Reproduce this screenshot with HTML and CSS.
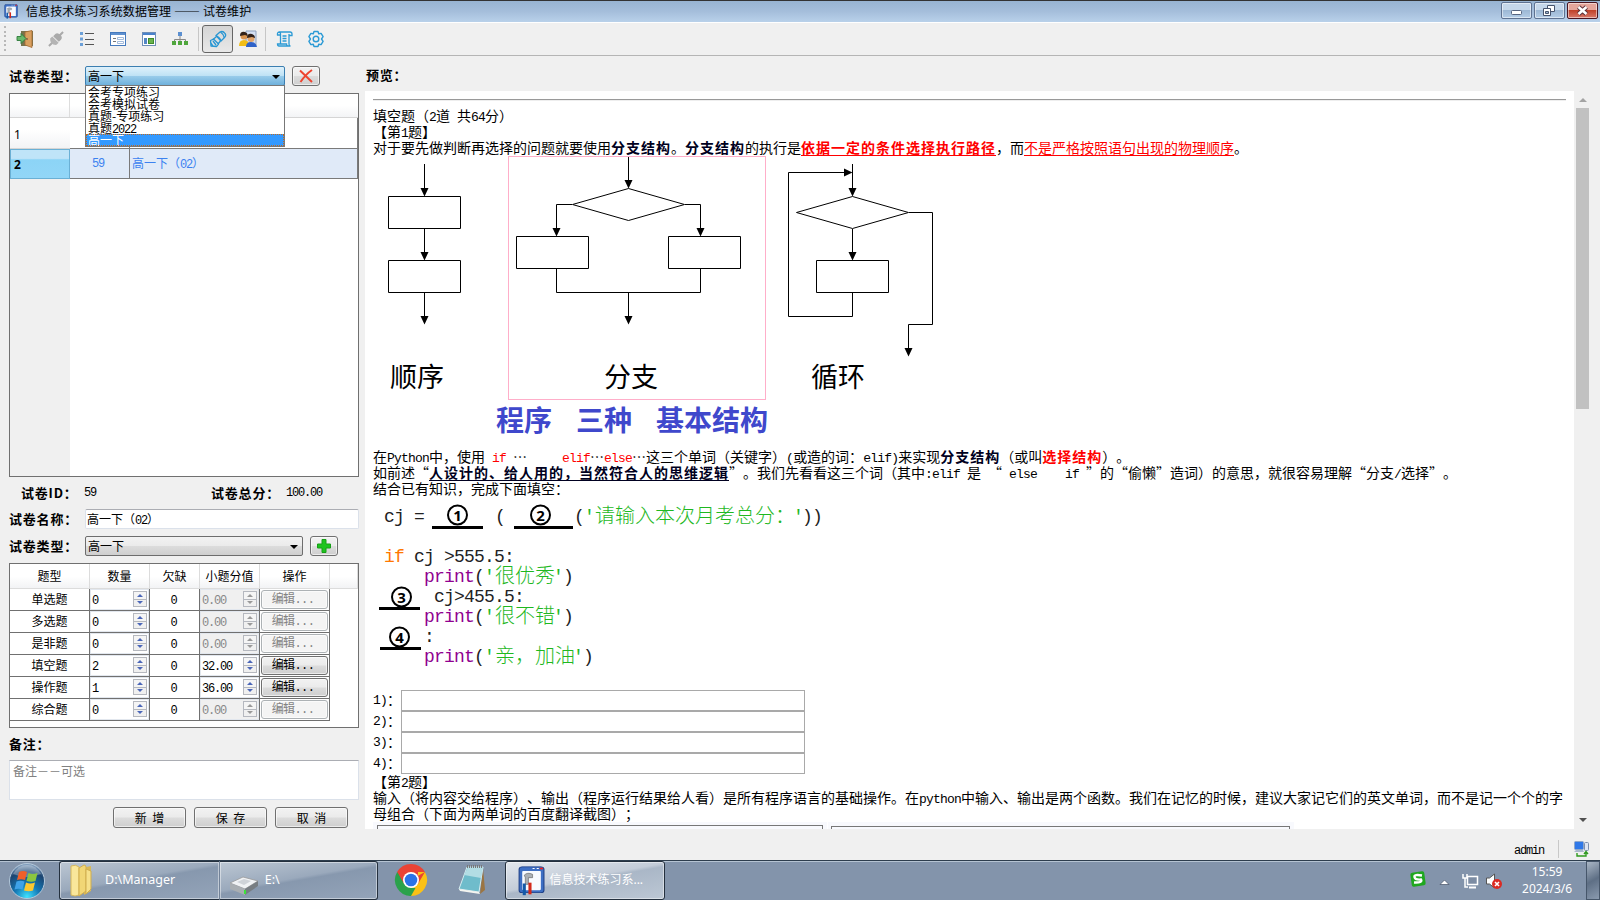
FILE: index.html
```html
<!doctype html>
<html lang="zh-CN">
<head>
<meta charset="utf-8">
<title>信息技术练习系统数据管理</title>
<link rel="stylesheet" href="styles.css">
</head>
<body>
<svg class="defs" width="0" height="0">
	<symbol id="app" viewBox="0 0 28 36" preserveAspectRatio="none">
		<rect x="3" y="1" width="24" height="31" rx="3" fill="#3d6fc4" stroke="#1d3f86"/>
		<rect x="6" y="6" width="18" height="23" rx="1" fill="#f7faff"/>
		<path d="M16 3h2M20 3h2" stroke="#fff"/><path d="M23 3h3" stroke="#e22" stroke-width="2"/>
		<path d="M8 11q3-4 8-1v4h-4v8h-3v-8z" fill="#aab0b6" stroke="#666" stroke-width=".7"/>
		<path d="M8 21v14" stroke="#1459a8" stroke-width="3"/>
		<path d="M13.500 20v14" stroke="#d3291b" stroke-width="3"/>
	</symbol>
</svg>

<div class="titlebar">
	<svg class="ticon" width="15" height="16"><use href="#app" width="15" height="15"/></svg>
	<span class="ttext">信息技术练习系统数据管理 <span class="dash">——</span> 试卷维护</span>
	<div class="winbtns">
		<span class="wb"><svg width="29" height="15"><rect x="9.5" y="7.500" width="10" height="4" rx="1" fill="#fff" stroke="#566480"/></svg></span>
		<span class="wb"><svg width="29" height="15"><g fill="#fff" stroke="#47546d"><path d="M12.500 2.500h7v6h-7z"/><path d="M8.500 5.500h7v7h-7z"/></g><path d="M10.500 8.500h3v2h-3z" fill="#9bb5d2" stroke="#47546d"/></svg></span>
		<span class="wb close"><svg width="29" height="15"><path d="M10.500 4l8 7M18.500 4l-8 7" stroke="#5a3038" stroke-width="4.500"/><path d="M10.500 4l8 7M18.500 4l-8 7" stroke="#fff" stroke-width="2.600"/></svg></span>
	</div>
</div>

<div class="toolbar">
	<span class="grip"></span>
	<svg class="tool" width="18" height="18"><path d="M5 1h12v15H5z" fill="#77734c"/><path d="M9 2l7-1.500v17L9 15z" fill="#d9a05f" stroke="#a46b32" stroke-width=".8"/><circle cx="11" cy="9" r=".8" fill="#533"/><path d="M1 6.500h4V3.500l5 5-5 5v-3H1z" fill="#68b86b" stroke="#2c7a3a" stroke-width=".9"/></svg>
	<svg class="tool" width="18" height="18"><g transform="rotate(45 9 9)" fill="#aaa"><path d="M8-1h2v5H8zM8 14h2v5H8z"/><path d="M5 9V6q0-3 4-3t4 3v3z"/><path d="M4.500 9.800h9v3q-4.500 5-9 0z" fill="#b4b4b4"/></g></svg>
	<svg class="tool" width="18" height="18"><g fill="#6ca0d8"><rect x="2" y="2" width="3" height="3"/><rect x="2" y="7.500" width="3" height="3"/><rect x="2" y="13" width="3" height="3"/></g><path d="M7 3.500h9M7 9.500h9M7 14.500h9" stroke="#555"/></svg>
	<svg class="tool" width="18" height="18"><rect x="1.500" y="2.500" width="15" height="13" fill="#fff" stroke="#4479bd"/><path d="M2 4h14" stroke="#5e90cf" stroke-width="2"/><path d="M4 8.500h3M4 11.500h3" stroke="#777"/><path d="M8.500 7.500h6v2h-6zM8.500 11.500h6v2h-6z" fill="none" stroke="#8aa9d3" stroke-width=".8"/></svg>
	<svg class="tool" width="18" height="18"><rect x="2.500" y="2.500" width="13" height="13" fill="#fff" stroke="#6f8fb8"/><path d="M3 4h12" stroke="#4a82cb" stroke-width="2"/><rect x="4" y="8" width="3" height="6" fill="#5386c4"/><rect x="8.500" y="8.500" width="5" height="5" fill="#69b34c" stroke="#3e8b2d"/></svg>
	<svg class="tool" width="18" height="18"><rect x="7" y="2" width="4" height="4" fill="#5b8fd0"/><path d="M9 6v3M3.500 12V9.500h11V12M9 9v3" fill="none" stroke="#888"/><g fill="#4fa63c"><rect x="1" y="11" width="4" height="4"/><rect x="7" y="11" width="4" height="4"/><rect x="13" y="11" width="4" height="4"/></g></svg>
	<span class="sep"></span>
	<span class="tool pressed"><svg width="18" height="18"><g fill="none" stroke="#2796d3" stroke-width="1.300" stroke-linejoin="round"><path d="M7 5.500l4-3.500q3-1.500 5 1.500 1.500 2-.5 4L12 11z"/><path d="M11.500 2q3 2 4 6M7 5.500q4 2 5 5.500M7.500 6.500l-4 3.500M11.500 11L9 14"/><path d="M1.500 10.500l3-1.500 5 5-2 2.500-5.500-.5zM4 11l3 4M2 13l2 3"/></g></svg></span>
	<svg class="tool" width="18" height="18"><path d="M7 1h10v15H7z" fill="#d5e0f2" stroke="#8da0bd"/><circle cx="5" cy="6" r="3.500" fill="#d9944f"/><path d="M1 6q0-5 5-4 3 1 2.500 4L6 5z" fill="#32221a"/><path d="M0 16q0-6 5-6t5 6z" fill="#f1bd17"/><circle cx="12" cy="8.500" r="3.500" fill="#e2a468"/><path d="M8 8q0-5 5-4 3 1 3 4l-3-1z" fill="#32221a"/><path d="M7 17q0-5 5-5t6 5z" fill="#2f62c8"/></svg>
	<span class="sep last"></span>
	<svg class="tool" width="18" height="18"><g fill="none" stroke="#2b9ad5" stroke-width="1.300"><path d="M4.500 14V4q0-2-1.500-2h11q2 0 2 2v1.500h-3M13 4v10q0 2 1.500 2H3q-1.500 0-1.500-2h9q0 2 1.500 2M4.500 5H1.500q-.5-3 2-3"/><path d="M6.500 6h4M6.500 8.500h4M6.500 11h4"/></g></svg>
	<svg class="tool" width="18" height="18"><g fill="none" stroke="#2b9ad5" stroke-width="1.400" stroke-linejoin="round"><path d="M7 1.500h4l.7 2.300 2.400-.4 2 3.300L14.500 9l1.600 2.300-2 3.300-2.400-.4L11 16.500H7l-.7-2.300-2.400.4-2-3.300L3.500 9 1.900 6.700l2-3.300 2.400.4z"/><circle cx="9" cy="9" r="2.800"/></g></svg>
</div>

<div class="main">
	<div class="left">
		<div class="row">
			<span class="lbl">试卷类型：</span>
			<div class="combo hot">高一下<i class="arr"></i>
				<div class="drop">
					<div>会考专项练习</div>
					<div>会考模拟试卷</div>
					<div>真题-专项练习</div>
					<div>真题<span class="en">2022</span></div>
					<div class="sel">高一下</div>
				</div>
			</div>
			<span class="btn sq"><svg width="16" height="16"><path d="M2 2.500l12 11.500M14 2q-6 4-11.500 12" fill="none" stroke="#ee4430" stroke-width="2"/></svg></span>
		</div>

		<div class="papers">
			<div class="phead"><span class="c0"></span><span class="c1"></span><span class="c2"></span></div>
			<div class="prow"><span class="c0">1</span><span class="c1"></span><span class="c2"></span></div>
			<div class="prow on"><span class="c0">2</span><span class="c1 en">59</span><span class="c2">高一下（<span class="en">02</span>）</span></div>
			<div class="pfill"></div>
		</div>

		<div class="ids">
			<span class="lbl idl">试卷ID：</span><span class="en idv">59</span>
			<span class="lbl sum">试卷总分：</span><span class="en">100.00</span>
		</div>
		<div class="row">
			<span class="lbl">试卷名称：</span>
			<div class="field">高一下（<span class="en">02</span>）</div>
		</div>
		<div class="row">
			<span class="lbl">试卷类型：</span>
			<div class="combo wide">高一下<i class="arr"></i></div>
			<span class="btn sq"><svg width="14" height="14"><path d="M5 .5h4V5h4.500v4H9v4.500H5V9H.5V5H5z" fill="#1ec41e" stroke="#16a016"/></svg></span>
		</div>

		<div class="types">
			<div class="trow thead"><span>题型</span><span>数量</span><span>欠缺</span><span>小题分值</span><span>操作</span><span></span></div>
			<div class="trow"><span>单选题</span><span class="num">0<i class="spin"></i></span><span class="en">0</span><span class="num off">0.00<i class="spin"></i></span><span><b class="btn off">编辑...</b></span></div>
			<div class="trow"><span>多选题</span><span class="num">0<i class="spin"></i></span><span class="en">0</span><span class="num off">0.00<i class="spin"></i></span><span><b class="btn off">编辑...</b></span></div>
			<div class="trow"><span>是非题</span><span class="num">0<i class="spin"></i></span><span class="en">0</span><span class="num off">0.00<i class="spin"></i></span><span><b class="btn off">编辑...</b></span></div>
			<div class="trow"><span>填空题</span><span class="num">2<i class="spin"></i></span><span class="en">0</span><span class="num">32.00<i class="spin"></i></span><span><b class="btn">编辑...</b></span></div>
			<div class="trow"><span>操作题</span><span class="num">1<i class="spin"></i></span><span class="en">0</span><span class="num">36.00<i class="spin"></i></span><span><b class="btn">编辑...</b></span></div>
			<div class="trow"><span>综合题</span><span class="num">0<i class="spin"></i></span><span class="en">0</span><span class="num off">0.00<i class="spin"></i></span><span><b class="btn off">编辑...</b></span></div>
		</div>

		<div class="lbl note">备注：</div>
		<div class="memo">备注－－可选</div>
		<div class="actions">
			<span class="btn">新 增</span><span class="btn">保 存</span><span class="btn">取 消</span>
		</div>
	</div>

	<div class="right">
		<div class="lbl plabel">预览：</div>
		<div class="pwrap">
			<div class="preview">
				<hr>
<div class="line">填空题（<span class="py">2</span>道<span class="py"> </span>共<span class="py">64</span>分）</div>
<div class="line">【第<span class="py">1</span>题】</div>
<div class="line">对于要先做判断再选择的问题就要使用<b class="navy">分支结构</b>。<b class="navy">分支结构</b>的执行是<b class="red u">依据一定的条件选择执行路径</b>，而<span class="red u">不是严格按照语句出现的物理顺序</span>。</div>
				<svg class="flow" width="600" height="293" viewBox="373 156 600 293">
					<rect x="508.500" y="156.500" width="257" height="243" fill="none" stroke="#ffaec9"/>
					<g fill="none" stroke="#000">
						<path d="M424.500 164v27M388.500 196.500h72v32h-72zM424.500 229v27M388.500 260.500h72v32h-72zM424.500 293v27"/>
						<path d="M628.500 157v27M572.500 204.500l56-16 56 16-56 16zM572 204.500h-15.500V233M685 204.500h15.500V233"/>
						<path d="M516.500 236.500h72v32h-72zM668.500 236.500h72v32h-72zM556.500 269v23.500h144V269M628.500 293v27"/>
						<path d="M852.500 164v27M796.500 212.500l56-16 56 16-56 16zM852.500 229v27M816.500 260.500h72v32h-72z"/>
						<path d="M852.500 293v23.500h-64v-144H845M909 212.500h23.500v112h-24V350"/>
					</g>
					<g fill="#000">
						<path d="M420.500 188h8l-4 8.500zM420.500 252h8l-4 8.500zM420.500 316h8l-4 8.500z"/>
						<path d="M624.500 180h8l-4 8.500zM552.500 228h8l-4 8.500zM696.500 228h8l-4 8.500zM624.500 316h8l-4 8.500z"/>
						<path d="M848.500 188h8l-4 8.500zM848.500 252h8l-4 8.500zM904.500 348h8l-4 8.500zM844 168.500v8l8.500-4z"/>
					</g>
					<g class="cap">
						<text x="390" y="387">顺序</text><text x="604" y="387">分支</text><text x="811" y="387">循环</text>
					</g>
					<g class="big">
						<text x="496" y="431">程序</text><text x="576" y="431">三种</text><text x="656" y="431">基本结构</text>
					</g>
				</svg>
<div class="line">在<span class="py">Python</span>中，使用<span class="py"> <span class="red">if</span> </span>…<span class="py">     <span class="red">elif</span></span>…<span class="py red">else</span>…这三个单词（关键字）<span class="py">(</span>或造的词：<span class="py">elif)</span>来实现<b class="navy">分支结构</b>（或叫<b class="red">选择结构</b>）。</div>
<div class="line">如前述“<b class="navy u">人设计的、给人用的，当然符合人的思维逻辑</b>”。我们先看看这三个词（其中<span class="py">:elif </span>是<span class="py"> </span>“<span class="py"> else    if </span>”的“偷懒”造词）的意思，就很容易理解“分支<span class="py">/</span>选择”。</div>
<div class="line">结合已有知识，完成下面填空：</div>
				<svg class="code" width="600" height="193" viewBox="373 497 600 193">
					<g fill="#222">
						<text x="384" y="522">cj =</text><text x="495" y="522">(</text>
						<text x="574" y="522">(<tspan class="str">'</tspan></text><text class="str zh" x="595" y="523">请输入本次月考总分：</text><text x="793" y="522"><tspan class="str">'</tspan><tspan x="802">))</tspan></text>
						<text x="384" y="562"><tspan class="kw">if</tspan><tspan x="414">cj &gt;555.5:</tspan></text>
						<text x="424" y="582"><tspan class="fn">print</tspan>(<tspan class="str">'</tspan></text><text class="str zh" x="495" y="583">很优秀</text><text x="553" y="582"><tspan class="str">'</tspan><tspan x="563">)</tspan></text>
						<text x="434" y="602">cj&gt;455.5:</text>
						<text x="424" y="622"><tspan class="fn">print</tspan>(<tspan class="str">'</tspan></text><text class="str zh" x="495" y="623">很不错</text><text x="553" y="622"><tspan class="str">'</tspan><tspan x="563">)</tspan></text>
						<text x="424" y="642">:</text>
						<text x="424" y="662"><tspan class="fn">print</tspan>(<tspan class="str">'</tspan></text><text class="str zh" x="495" y="663">亲，加油</text><text x="573" y="662"><tspan class="str">'</tspan><tspan x="583">)</tspan></text>
					</g>
					<path d="M432 527.500h51M514 527.500h59M379 608.500h41M380 648.500h41" stroke="#000" stroke-width="3"/>
					<g fill="none" stroke="#000" stroke-width="2"><circle cx="457.500" cy="515" r="9.500"/><circle cx="540.500" cy="515" r="9.500"/><circle cx="401.500" cy="597" r="9.500"/><circle cx="399.500" cy="637" r="9.500"/></g>
					<g class="ring"><text x="457.500" y="520.500">1</text><text x="540.500" y="520.500">2</text><text x="401.500" y="602.500">3</text><text x="399.500" y="642.500">4</text></g>
				</svg>
				<div class="ans"><span class="py">1)</span>：<span class="box"></span></div>
				<div class="ans"><span class="py">2)</span>：<span class="box"></span></div>
				<div class="ans"><span class="py">3)</span>：<span class="box"></span></div>
				<div class="ans"><span class="py">4)</span>：<span class="box"></span></div>
<div class="line">【第<span class="py">2</span>题】</div>
<div class="line">输入（将内容交给程序）、输出（程序运行结果给人看）是所有程序语言的基础操作。在<span class="py">python</span>中输入、输出是两个函数。我们在记忆的时候，建议大家记它们的英文单词，而不是记一个个的字</div>
<div class="line">母组合（下面为两单词的百度翻译截图）；</div>
				<div class="shots"><span class="s1"><i></i></span><span class="s2"><i></i></span></div>
			</div>
			<div class="scroll"><i class="up"></i><i class="thumb"></i><i class="down"></i></div>
		</div>
	</div>
</div>

<div class="status">
	<span class="admin">admin</span><span class="sline"></span>
	<svg width="17" height="17"><rect x="1.500" y=".5" width="9" height="8" rx="1" fill="#2f78e8" stroke="#8fa7c9"/><path d="M1 11h10l-1-2H3z" fill="#aab8cc"/><rect x="11.500" y="1.500" width="4" height="8" rx="1" fill="#dfe6f2" stroke="#7d8eac"/><path d="M4 12v3h9v-4M11 13l2-2.500 2 2.500" fill="none" stroke="#2e9a1e" stroke-width="1.400"/></svg>
</div>

<div class="taskbar">
	<svg class="orb" width="38" height="38">
		<defs>
			<radialGradient id="og" cx=".5" cy=".95" r=".9"><stop offset="0" stop-color="#3fe3ff"/><stop offset=".4" stop-color="#1478b5"/><stop offset=".8" stop-color="#1c4470"/><stop offset="1" stop-color="#7f9cbb"/></radialGradient>
		</defs>
		<circle cx="19" cy="19" r="17.500" fill="url(#og)" stroke="#b4c8da"/>
		<path d="M5 12Q10 3 19 3t14 9q-14 6-28 0z" fill="#fff" opacity=".3"/>
		<path d="M11 10q4-2 8 0l-2 8q-4-1.500-8 0z" fill="#f0602a"/>
		<path d="M20.500 11q4 2 9 0l-2 8q-4 1.500-9 0z" fill="#8cc63f"/>
		<path d="M8.500 19.500q4-1.500 8 0l-2 8q-4-1.500-8 0z" fill="#3fa2e8"/>
		<path d="M18 20.500q4 2 9 0l-2 8q-4 1.500-9 0z" fill="#fdc82f"/>
	</svg>
	<div class="tb first">
		<svg width="34" height="36"><path d="M14 5l9-2v25l-7 4z" fill="#d9b955"/><path d="M3 3q5-2 8 1v28q-4 2-8 0z" fill="#f9e79b" stroke="#d5b75d"/><path d="M11 5l5-3q2 0 2 2v24l-7 5z" fill="#f1d675" stroke="#d1ae4d"/><path d="M18 6l5 2v18l-5 5z" fill="#f6e08a" stroke="#cfad4e"/></svg>
		<span>D:\Manager</span>
	</div>
	<div class="tb second">
		<svg width="34" height="36"><path d="M2 20L15 14l15 4-13 8z" fill="#f0f2f4" stroke="#999" stroke-width=".8"/><path d="M2 20l15 6v6L2 26z" fill="#a9aeb2"/><path d="M17 26l13-8v5l-13 9z" fill="#777d82"/><path d="M17 27v4" stroke="#3be23b" stroke-width="2"/><path d="M9 19l7-3 7 2-7 4z" fill="#cfd3d8"/></svg>
		<span>E:\</span>
	</div>
	<svg class="chrome" width="34" height="34" viewBox="-17 -17 34 34">
		<path d="M0 0L-13.900-8A16 16 0 0 1 13.900-8z" fill="#ea4335"/>
		<path d="M0 0L13.900-8A16 16 0 0 1 0 16z" fill="#fbc116"/>
		<path d="M0 0L0 16A16 16 0 0 1-13.900-8z" fill="#2ba24c"/>
		<path d="M0-8h13.900L7 4zM-7 4L-13.900-8 0-8z" fill="#ea4335"/><path d="M7 4L0 16 3-2 13.900-8 7-8z" fill="#fbc116"/><path d="M-13.900-8L-7 4 0 8 4.500 8 0 16q-14-4-13.900-24z" fill="#2ba24c"/>
		<circle r="8" fill="#fff"/><circle r="6.300" fill="#2b73e8"/>
	</svg>
	<svg class="pad" width="34" height="36"><path d="M28 6l2 22-5 4z" fill="#9b7543"/><path d="M12 5h16l-4 25-20-3z" fill="#6fbccb" stroke="#d6edf1"/><path d="M13 5h15l-2 11-17-3z" fill="#b3dde4"/><path d="M4 27l20 3 1 2-20-3z" fill="#f5f5f0"/><path d="M12 4.500h16" stroke="#777" stroke-width="3" stroke-dasharray="1 1"/></svg>
	<div class="tb active">
		<svg width="30" height="30"><use href="#app" width="29" height="30"/></svg>
		<span>信息技术练习系...</span>
	</div>
	<div class="tray">
		<svg width="18" height="18"><rect x="2" y="2" width="14" height="14" rx="2" fill="#1fa81f" transform="rotate(-8 9 9)"/><path d="M13 5.500Q5 4 5.500 7t6.500 2.500q2 3.500-7 3" fill="none" stroke="#fff" stroke-width="2.400"/></svg>
		<svg class="t2" width="11" height="8"><path d="M1 6.500L5.500 2 10 6.500z" fill="#fff" stroke="#455066" stroke-width=".7"/></svg>
		<svg class="t3" width="18" height="18"><path d="M6.500 4.500h10v8h-10z" fill="#7c8ca3" stroke="#fff" stroke-width="1.500"/><path d="M8 15.500h7" stroke="#fff" stroke-width="2"/><path d="M2 2v4h4V2M4 6v9h3" fill="none" stroke="#fff" stroke-width="1.500"/></svg>
		<svg class="t4" width="18" height="18"><path d="M1.500 6h3l5-4v14l-5-4h-3z" fill="#fff" stroke="#555"/><circle cx="12" cy="12" r="5" fill="#dc2a22"/><path d="M10 10l4 4M14 10l-4 4" stroke="#fff" stroke-width="1.600"/></svg>
	</div>
	<div class="clock">15:59<br>2024/3/6</div>
	<div class="peek"></div>
</div>
</body>
</html>
```
FILE: styles.css
```css
* {
	box-sizing:border-box;
}
body {
	margin:0;
	width:1600px;
	height:900px;
	overflow:hidden;
	display:flex;
	flex-direction:column;
	background:#f0f0f0;
	color:#000;
	font:12px/14px "Noto Sans CJK SC", sans-serif;
	text-spacing-trim:space-all;
}
svg {
	display:block;
	flex:none;
}
.defs {
	position:absolute;
}
.en {
	font-family:"Liberation Mono", monospace;
	letter-spacing:-1.2px;
}

/* title bar */
.titlebar {
	height:23px;
	border-top:1px solid #333;
	border-bottom:1px solid #fff;
	background:linear-gradient(#98b4d2, #a5bedb 50%, #b9d1ea);
	display:flex;
	align-items:center;
	padding-left:3px;
}
.ttext {
	margin:-2px 0 0 8px;
	flex:1;
	letter-spacing:.1px;
}
.dash {
	font-size:13px;
}
.winbtns {
	display:flex;
	gap:2px;
	padding-right:2px;
	align-self:flex-start;
	margin-top:1px;
}
.wb {
	width:31px;
	height:17px;
	border:1px solid #5f7291;
	border-radius:2px;
	background:linear-gradient(#c5d7ea 45%, #9db8d5 50%, #b4cde7);
	box-shadow:inset 0 0 0 1px rgba(255,255,255,.5);
}
.wb.close {
	border-color:#4a1520;
	background:linear-gradient(#e5a69b 45%, #c0422a 50%, #d8796a);
}

/* tool bar */
.toolbar {
	height:33px;
	border-bottom:1px solid #b5b5b5;
	display:flex;
	align-items:center;
}
.grip {
	width:2px;
	height:27px;
	margin:0 10px 0 4px;
	background:repeating-linear-gradient(#b8b8b8 0 2px, transparent 2px 4.600px);
}
.tool {
	margin-right:13px;
}
.tool:nth-child(7) {
	margin-right:9px;
}
.sep {
	width:1px;
	height:24px;
	background:#c6c6c6;
}
.pressed {
	width:31px;
	height:28px;
	margin:0 6px 0 3px;
	display:flex;
	align-items:center;
	justify-content:center;
	border:1px solid #666;
	border-radius:3px;
	background:linear-gradient(#d5d5d5, #e8e8e8);
}
.pressed + .tool {
	margin-right:8px;
}
.last {
	margin-right:10px;
}

.main {
	height:782px;
	display:flex;
}
.left {
	width:365px;
	padding:10px 0 0 9px;
}
.row {
	height:20px;
	margin-bottom:7px;
	display:flex;
	align-items:center;
}
.lbl {
	font-weight:bold;
	font-size:13px;
	letter-spacing:.8px;
	white-space:nowrap;
}
.row .lbl {
	width:76px;
	margin-top:-1px;
}
.combo {
	position:relative;
	width:200px;
	height:20px;
	padding-left:2px;
	line-height:18px;
	border:1px solid #6d6d6d;
	border-radius:2px;
	background:linear-gradient(#f2f2f2, #ebebeb 48%, #dcdcdc 52%, #cfcfcf);
}
.combo.wide {
	width:218px;
}
.combo.hot {
	border-color:#3c7fb1;
	background:linear-gradient(#dff1fb, #bfe2f5 48%, #98cbea 52%, #6fb1dc);
}
.arr {
	float:right;
	margin:8px 4px 0 0;
	border:4px solid transparent;
	border-top-color:#000;
	border-bottom:0;
}
.drop {
	position:absolute;
	z-index:5;
	left:-1px;
	top:18px;
	width:200px;
	height:62px;
	border:1px solid #777;
	background:#fff;
	line-height:12px;
}
.drop div {
	height:12px;
	padding-left:2px;
}
.drop .sel {
	background:#3399ff;
	color:#fff;
	outline:1px dotted #c06a20;
	outline-offset:-1px;
}
.btn {
	display:flex;
	align-items:center;
	justify-content:center;
	border:1px solid #707070;
	border-radius:3px;
	background:linear-gradient(#f2f2f2, #ebebeb 48%, #dcdcdc 52%, #cfcfcf);
	box-shadow:inset 0 0 0 1px rgba(255,255,255,.6);
	font-weight:normal;
}
.sq {
	width:28px;
	height:20px;
	margin-left:7px;
}

/* paper list */
.papers {
	width:350px;
	height:384px;
	border:1px solid #707070;
	background:#fff;
	display:flex;
	flex-direction:column;
}
.phead, .prow {
	display:flex;
	height:24px;
	flex:none;
}
.phead {
	background:linear-gradient(#fff 50%, #f3f4f6);
	border-bottom:1px solid #d5d5d5;
}
.phead .c0 {
	border-right:1px solid #ddd;
}
.prow {
	height:31px;
	line-height:34px;
}
.c0 {
	width:60px;
	padding-left:4px;
	font-family:"Noto Sans", sans-serif;
}
.c1 {
	width:60px;
	text-align:center;
}
.c2 {
	flex:1;
	padding-left:2px;
}
.prow .c0 {
	background:linear-gradient(#fff 40%, #f2f3f5);
	border-bottom:1px solid #d5d5d5;
}
.prow .c1, .prow .c2 {
	border-right:1px solid #7a7a7a;
	border-bottom:1px solid #7a7a7a;
}
.prow.on {
	height:30px;
	line-height:28px;
	color:#3c82f0;
}
.prow.on .c1, .prow.on .c2 {
	background:#e0eaf8;
}
.prow.on .c1 {
	line-height:30px;
	padding-right:3px;
}
.prow.on .c0 {
	color:#000;
	font-weight:bold;
	border:1px solid #6ab0d5;
	padding-left:3px;
	line-height:30px;
	background:linear-gradient(#bfe4f8 30%, #8cd4f6 35%, #92d6f7);
}
.pfill {
	width:60px;
	flex:1;
	background:#f0f0f0;
}

.ids {
	height:32px;
	padding-bottom:1px;
	display:flex;
	align-items:center;
}
.idl {
	width:75px;
	padding-left:12px;
}
.idv {
	width:127px;
}
.sum {
	width:75px;
}
.field {
	width:274px;
	height:20px;
	padding-left:1px;
	line-height:17px;
	background:#fff;
	border:1px solid #dbe1ea;
	border-top-color:#abadb3;
	border-radius:2px;
}

/* question types */
.types {
	width:350px;
	height:165px;
	border:1px solid #707070;
	background:#fff;
}
.trow {
	height:22px;
	display:grid;
	grid-template-columns:80px 60px 50px 60px 70px 1fr;
	grid-template-rows:100%;
}
.trow > span {
	border-right:1px solid #707070;
	border-bottom:1px solid #707070;
	text-align:center;
	line-height:20px;
}
.trow > .en {
	line-height:24px;
	padding-right:2px;
}
.thead {
	height:25px;
	background:linear-gradient(#fff 50%, #f1f2f4);
}
.thead > span {
	line-height:24px;
	border-color:#dcdcdc;
}
.trow .num {
	display:flex;
	justify-content:space-between;
	padding-left:2px;
	line-height:24px;
	font-family:"Liberation Mono", monospace;
	letter-spacing:-1.2px;
	box-shadow:inset 0 0 0 1px #e2e7ee;
}
.trow .num.off {
	background:#f0f0f0;
	color:#888;
}
.spin {
	width:14px;
	height:16px;
	margin:2px 2px 0 0;
	border:1px solid #b5b8bf;
	background:linear-gradient(#f5f5f5 7px, #b5b8bf 7px 8px, #f0f0f0 8px);
}
.spin:before, .spin:after {
	content:"";
	display:block;
	width:0;
	margin:2px auto 0;
	border:3px solid transparent;
	border-top:0;
	border-bottom-color:#4a66b8;
}
.spin:after {
	margin-top:4px;
	border-top:3px solid #4a66b8;
	border-bottom:0;
}
.off .spin:before {
	border-bottom-color:#999;
}
.off .spin:after {
	border-top-color:#999;
}
.trow .btn {
	height:19px;
	margin:1px 1px;
	padding-right:3px;
	font-family:"Liberation Mono", "Noto Sans CJK SC", monospace;
	letter-spacing:-.6px;
}
.btn.off {
	background:#f4f4f4;
	border-color:#adb2b5;
	color:#838383;
}
.note {
	height:32px;
	line-height:32px;
}
.memo {
	width:350px;
	height:40px;
	padding:3px;
	background:#fff;
	border:1px solid #dbe1ea;
	border-top-color:#abadb3;
	color:#808080;
}
.actions {
	display:flex;
	gap:8px;
	margin:7px 0 0 104px;
}
.actions .btn {
	width:73px;
	height:21px;
	word-spacing:3px;
}

/* preview */
.right {
	width:1235px;
}
.plabel {
	height:35px;
	line-height:38px;
	padding-left:1px;
}
.pwrap {
	height:738px;
	display:flex;
}
.preview {
	width:1209px;
	height:738px;
	padding:8px 8px 0;
	background:#fff;
	overflow:hidden;
	font-size:14px;
}
.preview hr {
	margin:0 0 7px;
	height:2px;
	border:0;
	border-top:1px solid #999;
	border-bottom:1px solid #eee;
}
.line {
	height:16px;
	line-height:14px;
	white-space:pre;
}
.py {
	font-family:"Liberation Mono", monospace;
	font-size:13px;
	letter-spacing:-.8px;
}
.line b {
	letter-spacing:1px;
}
.navy {
	color:#000020;
}
.red {
	color:#f00;
}
.u {
	text-decoration:underline;
	text-underline-offset:2px;
	text-decoration-thickness:1px;
	text-decoration-skip-ink:none;
}
.cap {
	font-size:27px;
}
.big {
	font-size:28px;
	font-weight:bold;
	fill:#3f48cc;
}
.code {
	font-family:"Liberation Mono", monospace;
	font-size:18px;
	letter-spacing:-.8px;
	white-space:pre;
}
.zh {
	font-family:"Noto Sans CJK SC", sans-serif;
	font-size:20px;
	letter-spacing:0;
	font-weight:300;
}
.str {
	fill:#1fb81f;
}
.fn {
	fill:#900090;
}
.kw {
	fill:#ff7700;
}
.ring {
	font:bold 15px "Noto Sans", sans-serif;
	letter-spacing:0;
	text-anchor:middle;
}
.ans {
	height:21px;
	line-height:19px;
	display:flex;
}
.ans .py {
	width:14px;
	line-height:22px;
}
.box {
	width:404px;
	height:21px;
	border:1px solid #a9a9a9;
}
.shots {
	display:flex;
	gap:1px;
}
.shots span {
	width:454px;
	height:7px;
	padding:3px 4px 0;
	background:#f8f9fd;
}
.shots .s2 {
	width:466px;
	padding:4px 4px 0 3px;
}
.shots i {
	display:block;
	height:4px;
	border:1px solid #777;
	border-bottom:0;
}
.scroll {
	width:17px;
	padding:7px 2px 0;
	display:flex;
	flex-direction:column;
}
.up, .down {
	width:0;
	margin-left:3px;
	border:4px solid transparent;
	border-top:0;
	border-bottom-color:#a3a3a3;
}
.thumb {
	width:13px;
	height:301px;
	margin-top:6px;
	background:#c1c1c1;
}
.down {
	margin-top:409px;
	border-top:4px solid #505050;
	border-bottom:0;
}

.status {
	height:22px;
	display:flex;
	align-items:center;
	justify-content:flex-end;
	padding:0 10px 0 0;
}
.admin {
	font-family:"Liberation Mono", monospace;
	letter-spacing:-1.2px;
	padding-top:3px;
}
.sline {
	width:1px;
	height:18px;
	margin:0 14px 0 14px;
	background:#c8c8c8;
}

/* task bar */
.taskbar {
	height:40px;
	display:flex;
	align-items:center;
	background:#8394ab;
	border-top:1px solid #2d3d4d;
	box-shadow:inset 0 1px 0 #b5c3d2;
	color:#fff;
	font:13px/17px "Noto Sans", "Noto Sans CJK SC", sans-serif;
}
.orb {
	margin:0 13px 0 8px;
}
.tb {
	height:39px;
	width:160px;
	display:flex;
	align-items:center;
	padding-left:8px;
	border:1px solid #24303e;
	border-radius:3px;
	background:linear-gradient(170deg, #bcc7d3, #9aa9bc 45%, #8798ae 50%, #94a4b9);
	box-shadow:inset 0 0 0 1px rgba(255,255,255,.45);
	font-size:12.5px;
}
.tb span {
	margin:-2px 0 0 3px;
}
.first {
	border-right:0;
	border-radius:3px 0 0 3px;
}
.second {
	border-left:1px solid #728298;
	border-radius:0 3px 3px 0;
}
.chrome {
	margin:-2px 27px 0 16px;
}
.pad {
	margin:-2px 16px 0 0;
}
.active {
	background:linear-gradient(170deg, #e2e7ed, #c3ccd8 45%, #aab7c7 50%, #bcc7d4);
	padding-left:10px;
	font-size:12px;
	white-space:nowrap;
}
.tray {
	display:flex;
	align-items:center;
	margin:-4px 0 0 744px;
}
.t2 {
	margin:6px 11px 0 12px;
}
.t3 {
	margin:4px 6px 0 0;
}
.t4 {
	margin-top:4px;
}
.clock {
	width:78px;
	margin:-2px 0 0 5px;
	text-align:center;
	font-size:12px;
}
.peek {
	width:14px;
	height:39px;
	margin-left:auto;
	border:1px solid #46566a;
	background:linear-gradient(150deg, #a9b6c5, #5e6f85 50%, #8a9aaf);
}
```
